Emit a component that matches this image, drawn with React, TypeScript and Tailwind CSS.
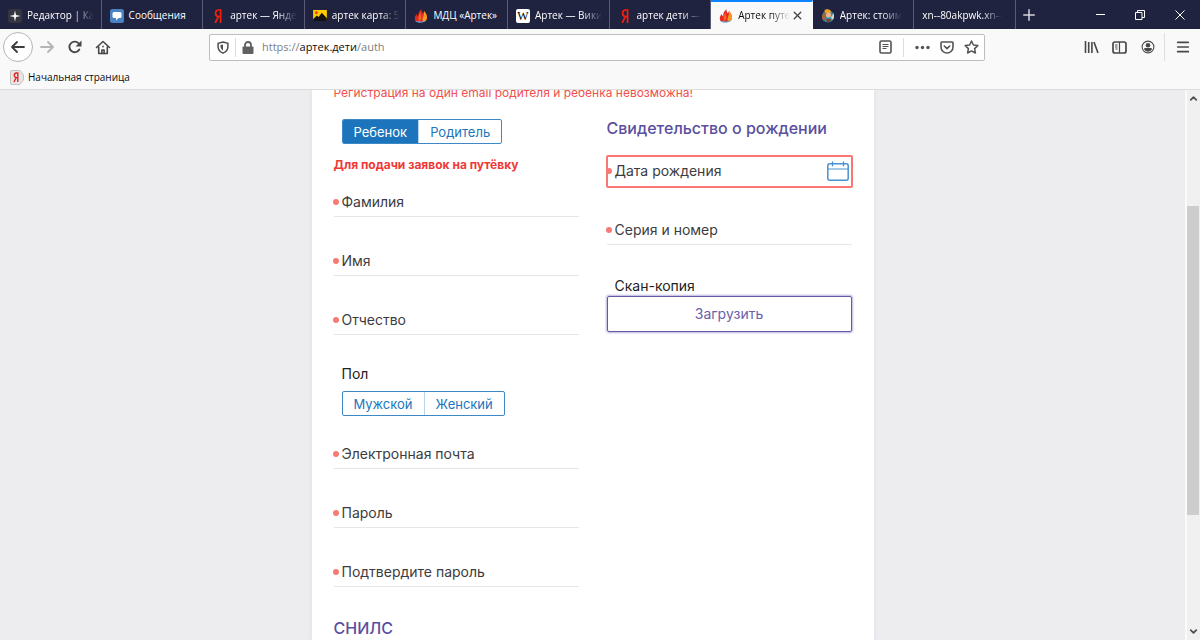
import { useState } from "react";
import type { ReactNode } from "react";
import { ChevronDown, ChevronUp, Menu, Plus, X } from "lucide-react";

type Tab = {
  title: string;
  icon?: ReactNode;
  active?: boolean;
  faded?: boolean;
};

const EditorIcon = () => (
  <svg width="14" height="14" viewBox="0 0 14 14" className="shrink-0">
    <rect width="14" height="14" rx="3" fill="#34363f" />
    <path d="M7 1.500 8 6l4.500 1L8 8l-1 4.500L6 8 1.500 7 6 6Z" fill="#fff" />
  </svg>
);

const MessagesIcon = () => (
  <svg width="14" height="14" viewBox="0 0 14 14" className="shrink-0">
    <rect width="14" height="14" rx="2.5" fill="#4a83c3" />
    <path d="M4 3h6a1.5 1.5 0 0 1 1.5 1.5v3A1.5 1.5 0 0 1 10 9H8.5L6 11.5V9H4a1.5 1.5 0 0 1-1.500-1.500v-3A1.5 1.5 0 0 1 4 3Z" fill="#fff" />
  </svg>
);

const YandexIcon = () => (
  <svg width="14" height="14" viewBox="0 0 14 14" className="shrink-0" fill="none" stroke="#f5200c" strokeWidth="1.7">
    <path d="M9.600 14V1H7.800C5.800 1 4.600 2.300 4.600 4.300c0 2 1.100 3.300 3.100 3.300h1.900M7.300 7.700 4.200 14" />
  </svg>
);

const PicturesIcon = () => (
  <svg width="14" height="11" viewBox="0 0 15 12" className="shrink-0">
    <rect width="15" height="12" fill="#fc0" />
    <path d="M0 10 4 6l2 1.500L9.500 3 15 9v3H0Z" fill="#111" />
    <circle cx="3.500" cy="3" r="1.600" fill="#f32" />
  </svg>
);

const FlameIcon = () => (
  <svg width="14" height="14" viewBox="0 0 14 14" className="shrink-0">
    <path d="M1.500 12C.3 9.500.5 7.500 2.800 5c.2 1.300.6 2 1.400 2.500C4 4.500 5 2.300 7.500.3c-.2 2 .5 3 1.500 4.200l1-2.500c1.800 2 3.200 4.500 3 7-.2 2.500-2.500 4-5.500 4-2.500 0-4.500-.3-6-1Z" fill="#e5281f" />
    <path d="M10 2c1.800 2 3.200 4.500 3 7-.2 2-1.500 3.300-3.500 3.700C8 11 8.300 9.500 9 8c.8-1.800 1.200-3.500 1-6Z" fill="#f79a22" />
    <path d="M6.500 3.500C6.200 6 8 7 7.300 9.500 7 10.800 6 11.500 5 12.500 4.300 9.500 4.500 6 6.500 3.500Z" fill="#f2662a" />
    <path d="M1 11.700c3.500 1.200 8 1.200 11.500-.7-1.800 3-8.500 4-11.500.7Z" fill="#6aa5d8" />
  </svg>
);

const WikiIcon = () => (
  <span className="flex h-[14px] w-[14px] shrink-0 items-center justify-center rounded-xs bg-white font-['Liberation_Serif',serif] text-xs leading-none text-black">
    W
  </span>
);

const TravelIcon = () => (
  <svg width="14" height="14" viewBox="0 0 14 14" className="shrink-0">
    <circle cx="7" cy="7.500" r="6" fill="#2f8fa8" />
    <path d="M1 8c0-3 2-5 4-5v4l-2 5C2 11 1 10 1 8Z" fill="#a8623a" />
    <path d="M3.500 1 6 0l3 1 1.500 2-2 1H4Z" fill="#f0a21e" />
    <circle cx="7.500" cy="6" r="2.600" fill="#e9b48a" />
    <path d="M10 8 13 4v5l-2 2Z" fill="#d9d3c5" />
    <path d="M5 10h5l-1 3H6Z" fill="#8b3c28" />
  </svg>
);

const tabs: Tab[] = [
  { title: "Редактор | Ка", icon: <EditorIcon />, faded: true },
  { title: "Сообщения", icon: <MessagesIcon /> },
  { title: "артек — Янде", icon: <YandexIcon />, faded: true },
  { title: "артек карта: 5", icon: <PicturesIcon />, faded: true },
  { title: "МДЦ «Артек»", icon: <FlameIcon /> },
  { title: "Артек — Вики", icon: <WikiIcon />, faded: true },
  { title: "артек дети —", icon: <YandexIcon />, faded: true },
  { title: "Артек путе", icon: <FlameIcon />, active: true, faded: true },
  { title: "Артек: стоим", icon: <TravelIcon />, faded: true },
  { title: "xn--80akpwk.xn--", faded: true },
];

const TabBar = () => (
  <div className="flex h-[29px] shrink-0 bg-[#202340] text-white">
    <div className="flex min-w-0 max-w-[1016px] flex-1">
      {tabs.map((tab) => (
        <div
          key={tab.title}
          className={`flex min-w-0 flex-1 items-center border-r pl-2 ${
            tab.active ? "border-t-2 border-r-[#f9f9fa] border-t-[#0a84ff] bg-[#f9f9fa] pb-[2px] text-[#0c0c0d]" : "border-[#5a5c73]"
          }`}
        >
          <button className="flex h-full min-w-0 flex-1 items-center gap-[5px] pt-[2px] text-left">
            {tab.icon}
            <span
              className={`whitespace-nowrap ${
                tab.faded ? "[mask-image:linear-gradient(to_right,black_calc(100%-20px),transparent)]" : ""
              }`}
            >
              {tab.title}
            </span>
          </button>
          {tab.active && (
            <button aria-label="Закрыть вкладку" className="mr-2 pt-[2px]">
              <X size={13} strokeWidth={2.5} color="#444" />
            </button>
          )}
        </div>
      ))}
    </div>
    <button aria-label="Новая вкладка" className="px-1">
      <Plus size={18} strokeWidth={2} color="#d4d4dc" />
    </button>
    <div className="ml-auto flex">
      <button aria-label="Свернуть" className="flex w-10 items-center justify-center">
        <span className="h-px w-[9px] bg-white" />
      </button>
      <button aria-label="Восстановить" className="flex w-10 items-center justify-center">
        <svg width="10" height="10" viewBox="0 0 10 10" fill="none" stroke="#fff">
          <path d="M.5 2.500h6.500v7H.5ZM2.500 2.500v-2h7v7H7" />
        </svg>
      </button>
      <button aria-label="Закрыть" className="flex w-10 items-center justify-center">
        <svg width="10" height="10" viewBox="0 0 10 10" fill="none" stroke="#fff">
          <path d="m.5.5 9 9M9.500.5l-9 9" />
        </svg>
      </button>
    </div>
  </div>
);

const Toolbar = () => (
  <div className="flex h-9 shrink-0 items-center">
    <div className="flex w-[209px] shrink-0 items-center pl-[3px]">
      <button aria-label="Назад" className="flex h-[30px] w-[30px] items-center justify-center rounded-full border border-[#b5b5b5] bg-white">
        <svg width="16" height="14" viewBox="0 0 16 14" fill="none" stroke="#3d3d3f" strokeWidth="1.8" strokeLinecap="round" strokeLinejoin="round">
          <path d="M14 7H2M7 2 2 7l5 5" />
        </svg>
      </button>
      <button aria-label="Вперёд" className="ml-[6px]">
        <svg width="16" height="14" viewBox="0 0 16 14" fill="none" stroke="#b4b4b6" strokeWidth="1.8" strokeLinecap="round" strokeLinejoin="round">
          <path d="M2 7h12M9 2l5 5-5 5" />
        </svg>
      </button>
      <button aria-label="Обновить" className="ml-3">
        <svg width="16" height="14" viewBox="0 0 16 14">
          <path d="M12.300 9.500A5.300 5.300 0 1 1 12 3.800" fill="none" stroke="#48484a" strokeWidth="1.900" strokeLinecap="round" />
          <path d="M14.500.5v6h-6Z" fill="#48484a" />
        </svg>
      </button>
      <button aria-label="Домой" className="ml-3">
        <svg width="16" height="15" viewBox="0 0 16 15" fill="none" stroke="#48484a" strokeWidth="1.600" strokeLinecap="round" strokeLinejoin="round">
          <path d="M1.500 7.500 8 1.500l6.500 6M3.700 7v6.500h8.600V7" />
          <path d="M6.900 13.500V10h2.200v3.500" />
          <path d="M8 6.300v.4" />
        </svg>
      </button>
    </div>
    <div className="flex h-[27px] min-w-0 flex-1 items-center rounded-xs border border-[#bdbdbf] bg-white">
      <button aria-label="Защита" className="ml-[7px]">
        <svg width="12" height="13" viewBox="0 0 12 13">
          <path d="M6 1 10.900 2.300v3.200c0 3-1.900 5.500-4.900 6.600-3-1.100-4.900-3.600-4.900-6.600V2.300Z" fill="none" stroke="#4f4f51" strokeWidth="1.500" />
          <path d="M6 3.500v6C4.500 8.500 3.500 7 3.500 5.500V4.100Z" fill="#4f4f51" />
        </svg>
      </button>
      <span className="mx-[6px] h-[19px] w-px bg-[#dedede]" />
      <button aria-label="Соединение">
        <svg width="12" height="13" viewBox="0 0 12 13">
          <rect x="0.500" y="5.500" width="11" height="7.500" rx="1" fill="#606062" />
          <path d="M3 6V4a3 3 0 0 1 6 0v2" fill="none" stroke="#606062" strokeWidth="1.800" />
        </svg>
      </button>
      <a href="#auth" className="ml-2 min-w-0 flex-1 truncate pt-px text-[11px] text-[#808082]">
        https://<span className="text-[#0c0c0d]">артек.дети</span>/auth
      </a>
      <button aria-label="Режим чтения">
        <svg width="13" height="14" viewBox="0 0 13 14" fill="none" stroke="#545456">
          <rect x="1" y="1" width="11" height="12" rx="1.500" strokeWidth="1.600" />
          <path d="M3.500 4.500h6M3.500 6.500h6M3.500 8.500h4" />
        </svg>
      </button>
      <span className="mx-[11px] h-[19px] w-px bg-[#dedede]" />
      <button aria-label="Действия на странице">
        <svg width="15" height="5" viewBox="0 0 15 5" fill="#545456">
          <circle cx="2" cy="2.500" r="1.700" />
          <circle cx="7.500" cy="2.500" r="1.700" />
          <circle cx="13" cy="2.500" r="1.700" />
        </svg>
      </button>
      <button aria-label="Pocket" className="ml-[10px]">
        <svg width="14" height="13" viewBox="0 0 14 13" fill="none" stroke="#545456" strokeWidth="1.600" strokeLinecap="round" strokeLinejoin="round">
          <path d="M1.800 1h10.400q.8 0 .8.800V6a6 6 0 0 1-12 0V1.800Q1 1 1.800 1Z" />
          <path d="m4.300 5 2.700 2.600L9.700 5" />
        </svg>
      </button>
      <button aria-label="Добавить в закладки" className="ml-[10px] mr-[5px]">
        <svg width="15" height="14" viewBox="0 0 15 14" fill="none" stroke="#545456" strokeWidth="1.500" strokeLinejoin="round">
          <path d="m7.500 1 1.900 4 4.400.6-3.200 3 .8 4.400-3.900-2.100L3.600 13l.8-4.400-3.200-3L5.600 5Z" />
        </svg>
      </button>
    </div>
    <div className="flex w-[215px] shrink-0 items-center justify-end self-stretch">
      <button aria-label="Библиотека">
        <svg width="15" height="12" viewBox="0 0 15 12" fill="none" stroke="#48484a" strokeWidth="1.600">
          <path d="M1.500 0v12M4.700 1v11M7.900 1v11M10 1l4 11" />
        </svg>
      </button>
      <button aria-label="Боковая панель" className="ml-[13px]">
        <svg width="15" height="13" viewBox="0 0 15 13" fill="none" stroke="#48484a">
          <rect x="1" y="1" width="13" height="11" rx="2" strokeWidth="1.700" />
          <path d="M7.500 1v11M3 4h2.500M3 6h2.500M3.500 8h2" strokeWidth="1.200" />
        </svg>
      </button>
      <button aria-label="Учётная запись" className="ml-[14px]">
        <svg width="14" height="14" viewBox="0 0 14 14">
          <circle cx="7" cy="7" r="5.900" fill="none" stroke="#48484a" strokeWidth="1.100" />
          <circle cx="7" cy="5.200" r="2.300" fill="#48484a" />
          <path d="M3 9.300q0-1.300 1.300-1.300h5.400q1.300 0 1.300 1.300A4.600 4.600 0 0 1 3 9.300Z" fill="#48484a" />
        </svg>
      </button>
      <span className="ml-[9px] h-7 w-px bg-[#dedede]" />
      <button aria-label="Меню" className="ml-[10px] mr-[9px]">
        <Menu size={16} strokeWidth={2.5} color="#48484a" />
      </button>
    </div>
  </div>
);

const BookmarksBar = () => (
  <div className="flex h-[25px] shrink-0 items-center border-b border-[#dcdcdd] pl-[10px]">
    <a href="#start" className="flex items-center gap-1">
      <svg width="14" height="15" viewBox="0 0 14 15">
        <path d="M2 .5h8L13.500 5v5L10 14.500H2Q.5 14.500.5 13V2Q.5.5 2 .5Z" fill="#e6e6e6" stroke="#c3c3c3" />
        <path d="M7.800 12V3H6.500C5.200 3 4.300 3.900 4.300 5.300c0 1.300.9 2.300 2.200 2.300h1.300M6.200 7.600 4 12" fill="none" stroke="#e52620" strokeWidth="1.400" />
      </svg>
      <span>Начальная страница</span>
    </a>
  </div>
);

const Dot = () => <span className="-ml-px h-[6px] w-[6px] shrink-0 rounded-full bg-[#f77a75]" />;

const Field = ({ label, type = "text" }: { label: string; type?: string }) => (
  <label className="flex h-[31px] items-center gap-[3px] border-b border-[#e6e6e8] pt-px">
    <Dot />
    <span className="shrink-0">{label}</span>
    <input type={type} className="min-w-0 flex-1 outline-none" />
  </label>
);

type ToggleProps = {
  label: string;
  options: string[];
  value: string;
  onChange: (value: string) => void;
};

const Toggle = ({ label, options, value, onChange }: ToggleProps) => (
  <div
    role="group"
    aria-label={label}
    className="ml-2 flex h-[25px] w-fit overflow-hidden rounded-xs border border-[#3d89c8] text-[13px] text-[#1c75bc]"
  >
    {options.map((option) => (
      <button
        key={option}
        type="button"
        aria-pressed={option === value}
        onClick={() => onChange(option)}
        className={`px-[11px] not-last:border-r not-last:border-[#b9d5eb] ${option === value ? "bg-[#1c75bc] text-white" : ""}`}
      >
        {option}
      </button>
    ))}
  </div>
);

const AuthForm = () => {
  const [role, setRole] = useState("Ребенок");
  const [gender, setGender] = useState("");

  return (
    <form
      onSubmit={(e) => e.preventDefault()}
      className="w-full max-w-[562px] bg-white px-[22px] font-[Inter,sans-serif] text-sm leading-5 text-[#3c3c41] shadow-[0_0_4px_#dcdce4]"
    >
      <p className="-mt-1 text-xs leading-[14px] text-[#f0504c]">
        Регистрация на один email родителя и ребенка невозможна!
      </p>
      <div className="grid grid-cols-2 gap-7 pt-[19px]">
        <div>
          <Toggle label="Роль" options={["Ребенок", "Родитель"]} value={role} onChange={setRole} />
          <p className="mt-3 text-xs leading-[18px] font-bold text-[#ee3a37]">Для подачи заявок на путёвку</p>
          <div className="mt-3 flex flex-col gap-7">
            <Field label="Фамилия" />
            <Field label="Имя" />
            <Field label="Отчество" />
          </div>
          <p className="mt-[29px] mb-[7px] ml-2 text-[#222]">Пол</p>
          <Toggle label="Пол" options={["Мужской", "Женский"]} value={gender} onChange={setGender} />
          <div className="mt-[22px] flex flex-col gap-7">
            <Field label="Электронная почта" type="email" />
            <Field label="Пароль" type="password" />
            <Field label="Подтвердите пароль" type="password" />
          </div>
          <h2 className="mt-[31px] pb-10 text-base leading-5 font-medium text-[#5a4f9e]">СНИЛС</h2>
        </div>
        <div>
          <h2 className="-mt-px text-base leading-5 font-medium text-[#5a4f9e]">Свидетельство о рождении</h2>
          <div className="-mx-px mt-[17px] flex h-[33px] items-center rounded-xs border-2 border-[#f97672] pr-[2px] pb-[2px]">
            <label className="-ml-px flex min-w-0 flex-1 items-center gap-[3px]">
              <Dot />
              <span className="shrink-0">Дата рождения</span>
              <input type="text" className="min-w-0 flex-1 outline-none" />
            </label>
            <button type="button" aria-label="Календарь">
              <svg width="22" height="20" viewBox="0 0 22 20" fill="none" stroke="#4a92cf" strokeLinecap="round">
                <rect x="0.800" y="2.800" width="20.400" height="16.400" rx="2" strokeWidth="1.500" />
                <path d="M5.500.8v4M16.500.8v4" strokeWidth="1.300" />
                <path d="M1 8h20" strokeWidth="1" />
              </svg>
            </button>
          </div>
          <div className="mt-[26px]">
            <Field label="Серия и номер" />
          </div>
          <p className="mt-[31px] ml-2 text-[#222]">Скан-копия</p>
          <button
            type="button"
            className="h-9 w-full rounded-xs border border-[#6459a3] text-[#6b61a8] shadow-[0_0_2px_1px_#b9b3dc]"
          >
            Загрузить
          </button>
        </div>
      </div>
    </form>
  );
};

const Scrollbar = () => (
  <div className="flex w-[15px] shrink-0 flex-col items-center border-l-2 border-[#fafafa] bg-[#f0f0f0]">
    <ChevronUp size={11} strokeWidth={4} color="#505050" className="my-[3px] shrink-0" />
    <div className="grow-[99]" />
    <div className="w-full grow-[309] border-r border-[#f0f0f0] bg-[#cdcdcd]" />
    <div className="grow-[108]" />
    <ChevronDown size={11} strokeWidth={4} color="#505050" className="my-[3px] shrink-0" />
  </div>
);

const App = () => (
  <div className="flex h-screen flex-col overflow-hidden bg-[#f9f9fa] font-['Open_Sans',sans-serif] text-[10px] text-[#0c0c0d]">
    <TabBar />
    <Toolbar />
    <BookmarksBar />
    <div className="flex min-h-0 flex-1">
      <main className="flex min-w-0 flex-1 justify-center overflow-hidden bg-[#ededf0]">
        <AuthForm />
      </main>
      <Scrollbar />
    </div>
  </div>
);

export default App;
